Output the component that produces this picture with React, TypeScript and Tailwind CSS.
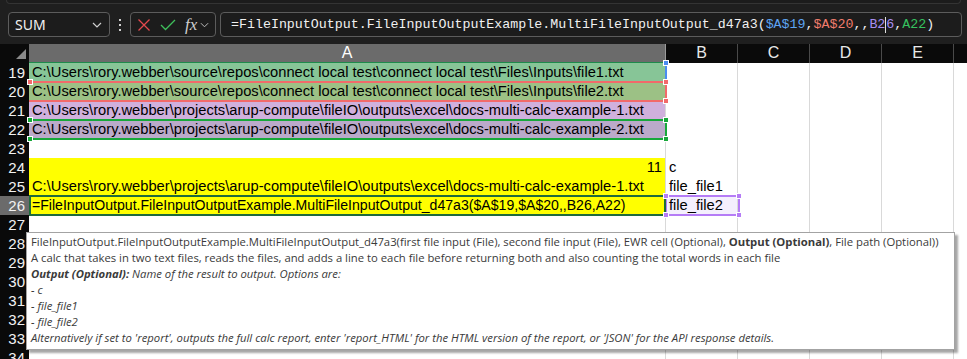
import React from "react";

const GRID = "grid grid-cols-[29px_637px_72px_72px_72px_72px_1fr]";
const CELL_FONT = "font-['Liberation_Sans',Arial,sans-serif]";

type Row = {
  n: number;
  a?: React.ReactNode;
  aAlign?: "left" | "right";
  aBg?: string;
  aSize?: string;
  b?: React.ReactNode;
  bBg?: string;
  selected?: boolean;
};

const rows: Row[] = [
  {
    n: 19,
    a: "C:\\Users\\rory.webber\\source\\repos\\connect local test\\connect local test\\Files\\Inputs\\file1.txt",
    aBg: "bg-[#87c597]",
  },
  {
    n: 20,
    a: "C:\\Users\\rory.webber\\source\\repos\\connect local test\\connect local test\\Files\\Inputs\\file2.txt",
    aBg: "bg-[#9cc185]",
  },
  {
    n: 21,
    a: "C:\\Users\\rory.webber\\projects\\arup-compute\\fileIO\\outputs\\excel\\docs-multi-calc-example-1.txt",
    aBg: "bg-[#d0b0dd]",
  },
  {
    n: 22,
    a: "C:\\Users\\rory.webber\\projects\\arup-compute\\fileIO\\outputs\\excel\\docs-multi-calc-example-2.txt",
    aBg: "bg-[#bbaaca]",
  },
  { n: 23 },
  { n: 24, a: "11", aAlign: "right", aBg: "bg-[#ffff00]", b: "c" },
  {
    n: 25,
    a: "C:\\Users\\rory.webber\\projects\\arup-compute\\fileIO\\outputs\\excel\\docs-multi-calc-example-1.txt",
    aBg: "bg-[#ffff00]",
    b: "file_file1",
  },
  {
    n: 26,
    a: "=FileInputOutput.FileInputOutputExample.MultiFileInputOutput_d47a3($A$19,$A$20,,B26,A22)",
    aBg: "bg-[#ffff00]",
    aSize: "text-[14.1px]",
    b: "file_file2",
    bBg: "bg-[#f4effd]",
    selected: true,
  },
  { n: 27 },
  { n: 28 },
  { n: 29 },
  { n: 30 },
  { n: 31 },
  { n: 32 },
  { n: 33 },
  { n: 34 },
];

function SheetRow({ r }: { r: Row }) {
  return (
    <div className={`${GRID} h-[19px] ${CELL_FONT} text-[14.7px] leading-[19px] text-black`}>
      <div
        className={`pr-[4px] text-right text-[15px] text-[#f2f2f2] border-b border-[#1c1c1c] ${
          r.selected ? "bg-[#6b6b6b]" : "bg-[#0a0a0a]"
        }`}
      >
        {r.n}
      </div>
      <div
        className={`overflow-hidden whitespace-nowrap border-r border-b border-[#d9d9d9] px-[3px] ${
          r.aBg ?? "bg-white"
        } ${r.aAlign === "right" ? "text-right" : ""} ${r.aSize ?? ""}`}
      >
        {r.a}
      </div>
      <div
        className={`overflow-hidden whitespace-nowrap border-r border-b border-[#d9d9d9] px-[3px] ${
          r.bBg ?? "bg-white"
        }`}
      >
        {r.b}
      </div>
      <div className="border-r border-b border-[#d9d9d9] bg-white" />
      <div className="border-r border-b border-[#d9d9d9] bg-white" />
      <div className="border-r border-b border-[#d9d9d9] bg-white" />
      <div className="border-b border-[#d9d9d9] bg-white" />
    </div>
  );
}

function Handle({ cls, color }: { cls: string; color: string }) {
  return <div className={`absolute h-[6px] w-[6px] border border-white ${color} ${cls}`} />;
}

export default function App() {
  return (
    <div className="relative h-[359px] w-[967px] overflow-hidden bg-[#1f1f1f]">
      {/* ribbon edge */}
      <div className="mx-[6px] h-[4px] rounded-b-[6px] border-x border-b border-[#343434] bg-[#1c1c1c]" />

      {/* formula bar */}
      <div className="mt-[8px] flex h-[25px] items-center">
        <div className="ml-[8px] flex h-[25px] w-[102px] items-center justify-between rounded-[4px] border border-[#5c5c5c] bg-[#1c1c1c] pl-[6px] pr-[7px] font-['Noto_Sans',sans-serif] text-[14px] text-[#f2f2f2]">
          <span>SUM</span>
          <svg viewBox="0 0 10 6" className="h-[6px] w-[10px]" fill="none" stroke="#cfcfcf" strokeWidth="1.2">
            <path d="M1 1l4 4 4-4" />
          </svg>
        </div>
        <div className="flex w-[20px] flex-col items-center justify-center gap-[3px]">
          <span className="h-[2px] w-[2px] bg-[#d0d0d0]" />
          <span className="h-[2px] w-[2px] bg-[#d0d0d0]" />
          <span className="h-[2px] w-[2px] bg-[#d0d0d0]" />
        </div>
        <div className="flex h-[25px] w-[86px] items-center rounded-[4px] border border-[#5c5c5c] bg-[#1c1c1c] pl-[6px]">
          <svg viewBox="0 0 14 14" className="h-[14px] w-[14px]" fill="none" stroke="#e5484d" strokeWidth="1.3">
            <path d="M1.5 1.5l11 11M12.5 1.5l-11 11" />
          </svg>
          <svg viewBox="0 0 16 12" className="ml-[9px] h-[12px] w-[16px]" fill="none" stroke="#3fbf5b" strokeWidth="1.3">
            <path d="M1 6l4.5 4.5L15 1" />
          </svg>
          <span className="ml-[9px] font-['Liberation_Serif',serif] text-[17px] italic leading-none text-[#cfcfcf]">
            fx
          </span>
          <svg viewBox="0 0 10 6" className="ml-[3px] h-[6px] w-[9px]" fill="none" stroke="#bdbdbd" strokeWidth="1.1">
            <path d="M1 1l4 4 4-4" />
          </svg>
        </div>
        <div className="ml-[4px] flex h-[25px] w-[742px] items-center rounded-[4px] border border-[#5c5c5c] bg-[#1c1c1c] pl-[10px] font-['Liberation_Mono',monospace] text-[13.3px] whitespace-nowrap text-[#f0f0f0]">
          <span>=FileInputOutput.FileInputOutputExample.MultiFileInputOutput_d47a3(</span>
          <span className="text-[#5ea4f2]">$A$19</span>
          <span>,</span>
          <span className="text-[#f27c6c]">$A$20</span>
          <span>,,</span>
          <span className="text-[#a88ef2]">B2</span>
          <span className="h-[16px] w-px bg-[#e0e0e0]" />
          <span className="text-[#a88ef2]">6</span>
          <span>,</span>
          <span className="text-[#36c25f]">A22</span>
          <span>)</span>
        </div>
      </div>

      {/* sheet */}
      <div className="relative mt-[7px]">
        <div className={`${GRID} h-[19px] ${CELL_FONT} text-[16px] leading-[18px] text-[#e8e8e8]`}>
          <div className="relative border-b border-[#0a0a0a] bg-[#0a0a0a]">
            <svg viewBox="0 0 10 10" className="absolute bottom-[4px] right-[3px] h-[10px] w-[10px]">
              <path d="M10 0V10H0Z" fill="#8a8a8a" />
            </svg>
          </div>
          <div className="border-b-2 border-r border-b-[#1f8a4c] border-r-[#9a9a9a] bg-[#6b6b6b] text-center text-white">
            A
          </div>
          {["B", "C", "D", "E"].map((c) => (
            <div key={c} className="border-r border-b border-r-[#4a4a4a] border-b-[#8a8a8a] bg-[#0a0a0a] text-center">
              {c}
            </div>
          ))}
          <div className="border-b border-[#8a8a8a] bg-[#0a0a0a]" />
        </div>
        {rows.map((r) => (
          <SheetRow key={r.n} r={r} />
        ))}

        {/* reference highlights */}
        <div className="absolute left-[29px] top-[18px] h-[20px] w-[638px] border-r-2 border-[#4a8cf0]" />
        <div className="absolute left-[29px] top-[37px] h-[21px] w-[638px] border-y-2 border-r-2 border-[#f26a6a]" />
        <div className="absolute left-[29px] top-[75px] h-[21px] w-[638px] border-y-2 border-r-2 border-[#17a83a]" />
        <div className="absolute left-[665px] top-[151px] h-[21px] w-[75px] border-2 border-[#b57cf6]" />
        <div className="absolute left-[29px] top-[151px] h-[21px] w-[637px] border-y-2 border-r-2 border-[#1f6b3d]" />
        <div className="absolute left-[29px] top-[151px] h-[21px] w-[2px] bg-[#1f6b3d]" />

        <Handle color="bg-[#4a8cf0]" cls="left-[663px] top-[16px]" />
        <Handle color="bg-[#f26a6a]" cls="left-[663px] top-[35px]" />
        <Handle color="bg-[#f26a6a]" cls="left-[663px] top-[54px]" />
        <Handle color="bg-[#f26a6a]" cls="left-[27px] top-[35px]" />
        <Handle color="bg-[#17a83a]" cls="left-[663px] top-[73px]" />
        <Handle color="bg-[#17a83a]" cls="left-[663px] top-[92px]" />
        <Handle color="bg-[#17a83a]" cls="left-[27px] top-[73px]" />
        <Handle color="bg-[#17a83a]" cls="left-[27px] top-[92px]" />
        <Handle color="bg-[#b57cf6]" cls="left-[663px] top-[149px]" />
        <Handle color="bg-[#b57cf6]" cls="left-[663px] top-[168px]" />
        <Handle color="bg-[#b57cf6]" cls="left-[736px] top-[149px]" />
        <Handle color="bg-[#b57cf6]" cls="left-[736px] top-[168px]" />

        {/* function tooltip */}
        <div className="absolute left-[26px] top-[188px] w-[929px] border border-[#a3a3a3] bg-white px-[4px] pt-[1px] pb-[3px] font-['Open_Sans',sans-serif] text-[11.3px] leading-[16px] text-[#3a3a3a] shadow-[3px_3px_2px_rgba(0,0,0,0.35)]">
          <div className="whitespace-nowrap">
            FileInputOutput.FileInputOutputExample.MultiFileInputOutput_d47a3(first file input (File), second
            file input (File), EWR cell (Optional), <b>Output (Optional)</b>, File path (Optional))
          </div>
          <div>
            A calc that takes in two text files, reads the files, and adds a line to each file before returning
            both and also counting the total words in each file
          </div>
          <div className="italic">
            <b>Output (Optional):</b> Name of the result to output. Options are:
          </div>
          <div className="italic">- c</div>
          <div className="italic">- file_file1</div>
          <div className="italic">- file_file2</div>
          <div className="italic whitespace-nowrap">
            Alternatively if set to 'report', outputs the full calc report, enter 'report_HTML' for the HTML version
            of the report, or 'JSON' for the API response details.
          </div>
        </div>
      </div>
    </div>
  );
}
